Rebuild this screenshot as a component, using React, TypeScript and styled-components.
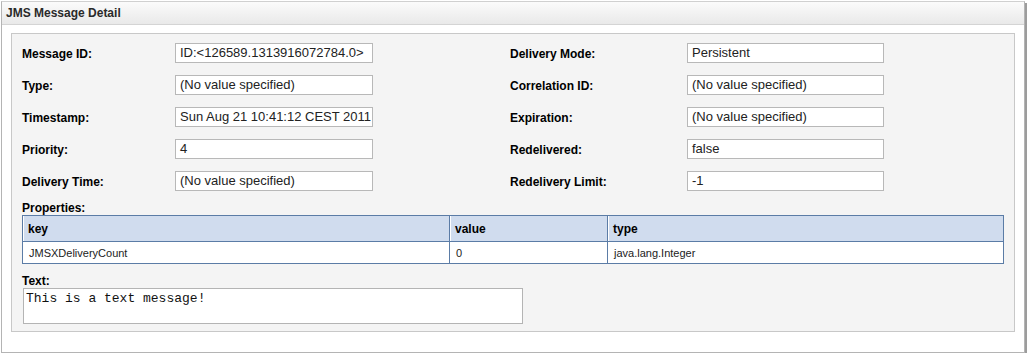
import React from "react";
import styled, { createGlobalStyle } from "styled-components";

const GlobalStyle = createGlobalStyle`
  html, body {
    margin: 0;
    padding: 0;
    background: #ffffff;
  }
  *, *::before, *::after {
    box-sizing: border-box;
  }
`;

// Styled Components
const Panel = styled.div`
  margin: 1px 0 0 1px;
  width: 1024px;
  height: 352px;
  border: 1px solid #b4b4b4;
  border-top-color: #d0d0d0;
  background: #ffffff;
  box-shadow: 2px 2px 0 #9c9c9c;
  font-family: "Liberation Sans", Arial, sans-serif;
  color: #000;
`;

const PanelHeader = styled.div`
  height: 23px;
  padding: 0 4px;
  display: flex;
  align-items: center;
  background: linear-gradient(#fbfbfb, #e9e9e9);
  border-bottom: 1px solid #d4d4d4;
  font-size: 12px;
  font-weight: bold;
  color: #2a2a2a;
`;

const Fieldset = styled.div`
  margin: 8px 9px 0 9px;
  border: 1px solid #c8c8c8;
  background: #f4f4f4;
  padding: 9px 10px 7px 10px;
`;

const Columns = styled.div`
  display: flex;
  gap: 137px;
`;

const FieldGrid = styled.div<{ $labelWidth: number; $boxWidth: number }>`
  display: grid;
  grid-template-columns: ${(p) => p.$labelWidth}px ${(p) => p.$boxWidth}px;
  row-gap: 12px;
  align-items: center;
`;

const Label = styled.div`
  font-size: 12px;
  font-weight: bold;
  line-height: 14px;
  padding-top: 2px;
`;

const ValueBox = styled.div`
  height: 20px;
  background: #ffffff;
  border: 1px solid #b8b8b8;
  padding: 0 2px 0 4px;
  font-size: 13px;
  line-height: 18px;
  color: #222;
  white-space: nowrap;
`;

const SectionLabel = styled.div`
  margin-top: 10px;
  font-size: 12px;
  font-weight: bold;
  line-height: 14px;
`;

const Table = styled.table`
  width: 982px;
  border-collapse: collapse;
  border: 1px solid #5b7ca6;
  background: #ffffff;
  table-layout: fixed;
`;

const HeadCell = styled.th<{ $width?: number }>`
  width: ${(p) => (p.$width ? `${p.$width}px` : "auto")};
  height: 26px;
  padding: 0 5px;
  text-align: left;
  font-size: 12px;
  font-weight: bold;
  background: #d0dcee;
  border-left: 1px solid #5b7ca6;
  border-bottom: 1px solid #5b7ca6;
  box-shadow: inset 1px 0 0 #ffffff;
`;

const BodyCell = styled.td`
  height: 22px;
  padding: 0 6px;
  font-size: 11px;
  color: #222;
  border-left: 1px solid #5b7ca6;
`;

const TextArea = styled.div`
  margin-left: 1px;
  width: 500px;
  height: 36px;
  background: #ffffff;
  border: 1px solid #b4b4b4;
  padding: 2px 2px;
  font-family: "Liberation Mono", "Courier New", monospace;
  font-size: 13px;
  line-height: 15px;
  color: #111;
`;

const leftFields = [
  ["Message ID:", "ID:<126589.1313916072784.0>"],
  ["Type:", "(No value specified)"],
  ["Timestamp:", "Sun Aug 21 10:41:12 CEST 2011"],
  ["Priority:", "4"],
  ["Delivery Time:", "(No value specified)"],
];

const rightFields = [
  ["Delivery Mode:", "Persistent"],
  ["Correlation ID:", "(No value specified)"],
  ["Expiration:", "(No value specified)"],
  ["Redelivered:", "false"],
  ["Redelivery Limit:", "-1"],
];

const properties = [
  { key: "JMSXDeliveryCount", value: "0", type: "java.lang.Integer" },
];

const App: React.FC = () => {
  return (
    <>
      <GlobalStyle />
      <Panel>
        <PanelHeader>JMS Message Detail</PanelHeader>
        <Fieldset>
          <Columns>
            <FieldGrid $labelWidth={153} $boxWidth={198}>
              {leftFields.map(([label, value]) => (
                <React.Fragment key={label}>
                  <Label>{label}</Label>
                  <ValueBox>{value}</ValueBox>
                </React.Fragment>
              ))}
            </FieldGrid>
            <FieldGrid $labelWidth={177} $boxWidth={197}>
              {rightFields.map(([label, value]) => (
                <React.Fragment key={label}>
                  <Label>{label}</Label>
                  <ValueBox>{value}</ValueBox>
                </React.Fragment>
              ))}
            </FieldGrid>
          </Columns>
          <SectionLabel>Properties:</SectionLabel>
          <Table>
            <thead>
              <tr>
                <HeadCell $width={427}>key</HeadCell>
                <HeadCell $width={158}>value</HeadCell>
                <HeadCell>type</HeadCell>
              </tr>
            </thead>
            <tbody>
              {properties.map((p) => (
                <tr key={p.key}>
                  <BodyCell>{p.key}</BodyCell>
                  <BodyCell>{p.value}</BodyCell>
                  <BodyCell>{p.type}</BodyCell>
                </tr>
              ))}
            </tbody>
          </Table>
          <SectionLabel>Text:</SectionLabel>
          <TextArea>This is a text message!</TextArea>
        </Fieldset>
      </Panel>
    </>
  );
};

export default App;
